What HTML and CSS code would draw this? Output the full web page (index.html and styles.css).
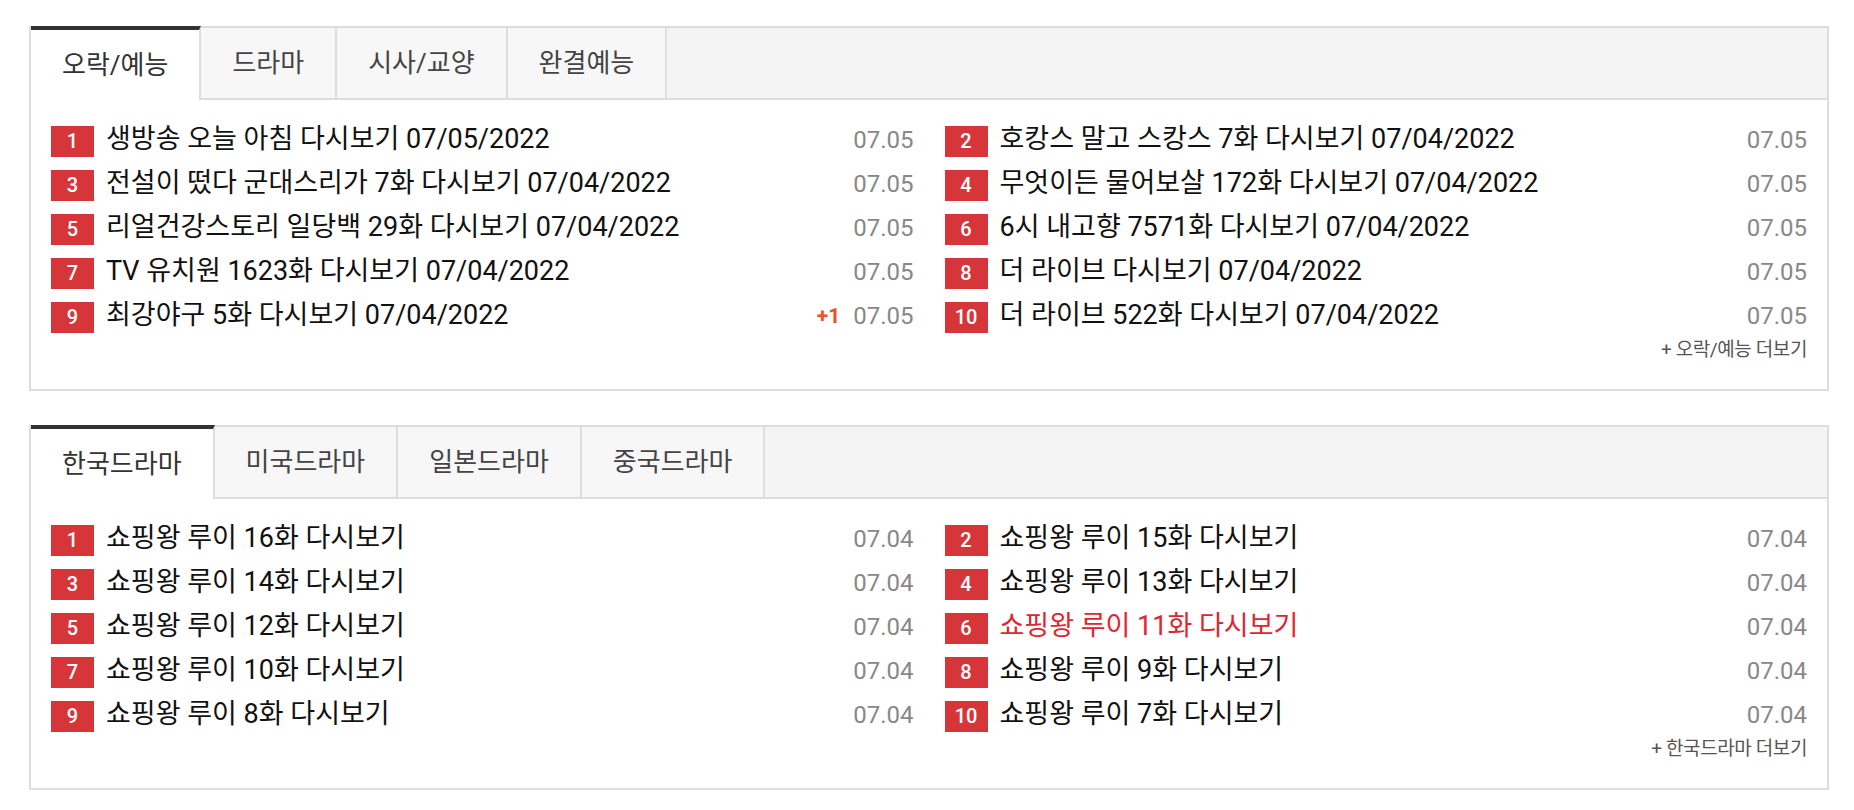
FILE: index.html
```html
<!DOCTYPE html>
<html lang="ko">
<head>
<meta charset="utf-8">
<title>다시보기</title>
<link rel="stylesheet" href="styles.css">
</head>
<body>
<div class="page">
  <section class="board">
    <nav class="tabs">
      <a class="tab active">오락/예능</a>
      <a class="tab">드라마</a>
      <a class="tab">시사/교양</a>
      <a class="tab">완결예능</a>
    </nav>
    <div class="panel">
      <ul class="grid">
        <li class="item"><span class="rank">1</span><a class="title">생방송 오늘 아침 다시보기 07/05/2022</a><span class="date">07.05</span></li>
        <li class="item"><span class="rank">2</span><a class="title">호캉스 말고 스캉스 7화 다시보기 07/04/2022</a><span class="date">07.05</span></li>
        <li class="item"><span class="rank">3</span><a class="title">전설이 떴다 군대스리가 7화 다시보기 07/04/2022</a><span class="date">07.05</span></li>
        <li class="item"><span class="rank">4</span><a class="title">무엇이든 물어보살 172화 다시보기 07/04/2022</a><span class="date">07.05</span></li>
        <li class="item"><span class="rank">5</span><a class="title">리얼건강스토리 일당백 29화 다시보기 07/04/2022</a><span class="date">07.05</span></li>
        <li class="item"><span class="rank">6</span><a class="title">6시 내고향 7571화 다시보기 07/04/2022</a><span class="date">07.05</span></li>
        <li class="item"><span class="rank">7</span><a class="title">TV 유치원 1623화 다시보기 07/04/2022</a><span class="date">07.05</span></li>
        <li class="item"><span class="rank">8</span><a class="title">더 라이브 다시보기 07/04/2022</a><span class="date">07.05</span></li>
        <li class="item"><span class="rank">9</span><a class="title">최강야구 5화 다시보기 07/04/2022</a><span class="hot">+1</span><span class="date">07.05</span></li>
        <li class="item"><span class="rank">10</span><a class="title">더 라이브 522화 다시보기 07/04/2022</a><span class="date">07.05</span></li>
      </ul>
      <div class="more"><a>+ 오락/예능 더보기</a></div>
    </div>
  </section>

  <section class="board">
    <nav class="tabs">
      <a class="tab active">한국드라마</a>
      <a class="tab">미국드라마</a>
      <a class="tab">일본드라마</a>
      <a class="tab">중국드라마</a>
    </nav>
    <div class="panel">
      <ul class="grid">
        <li class="item"><span class="rank">1</span><a class="title">쇼핑왕 루이 16화 다시보기</a><span class="date">07.04</span></li>
        <li class="item"><span class="rank">2</span><a class="title">쇼핑왕 루이 15화 다시보기</a><span class="date">07.04</span></li>
        <li class="item"><span class="rank">3</span><a class="title">쇼핑왕 루이 14화 다시보기</a><span class="date">07.04</span></li>
        <li class="item"><span class="rank">4</span><a class="title">쇼핑왕 루이 13화 다시보기</a><span class="date">07.04</span></li>
        <li class="item"><span class="rank">5</span><a class="title">쇼핑왕 루이 12화 다시보기</a><span class="date">07.04</span></li>
        <li class="item"><span class="rank">6</span><a class="title visited">쇼핑왕 루이 11화 다시보기</a><span class="date">07.04</span></li>
        <li class="item"><span class="rank">7</span><a class="title">쇼핑왕 루이 10화 다시보기</a><span class="date">07.04</span></li>
        <li class="item"><span class="rank">8</span><a class="title">쇼핑왕 루이 9화 다시보기</a><span class="date">07.04</span></li>
        <li class="item"><span class="rank">9</span><a class="title">쇼핑왕 루이 8화 다시보기</a><span class="date">07.04</span></li>
        <li class="item"><span class="rank">10</span><a class="title">쇼핑왕 루이 7화 다시보기</a><span class="date">07.04</span></li>
      </ul>
      <div class="more"><a>+ 한국드라마 더보기</a></div>
    </div>
  </section>
</div>
</body>
</html>
```

FILE: styles.css
```css
* {
  box-sizing: border-box;
}

html, body {
  margin: 0;
  padding: 0;
  background: #ffffff;
}

body {
  font-family: Roboto, "Noto Sans CJK KR", sans-serif;
  color: #111111;
}

.page {
  display: flex;
  flex-direction: column;
  gap: 34px;
  padding: 26px 0 0 29px;
  width: 1829px;
}

.board {
  border: 2px solid #dddddd;
  background: #ffffff;
}

.tabs {
  display: flex;
  height: 72px;
  background: #f4f4f4;
  border-bottom: 2px solid #dddddd;
}

.tab {
  display: block;
  padding: 0 31px;
  background: #f7f7f7;
  border-right: 2px solid #dddddd;
  font-size: 26px;
  line-height: 70px;
  color: #444444;
  white-space: nowrap;
}

.tab.active {
  background: #ffffff;
  margin: -2px 0 -2px 0;
  border-top: 4px solid #333333;
  color: #333333;
}

.panel {
  padding: 16px 20px 27px 20px;
}

.grid {
  list-style: none;
  margin: 0;
  padding: 0;
  display: grid;
  grid-template-columns: 1fr 1fr;
  column-gap: 31px;
}

.item {
  display: flex;
  align-items: flex-start;
  height: 44px;
  padding-top: 10px;
}

.rank {
  flex: 0 0 43px;
  height: 31px;
  margin-right: 12px;
  background: #d6363a;
  color: #ffffff;
  font-size: 20px;
  font-weight: 500;
  line-height: 31px;
  text-align: center;
}

.title {
  flex: 1 1 auto;
  min-width: 0;
  font-size: 27px;
  line-height: 26px;
  color: #111111;
  white-space: nowrap;
}

.title.visited {
  color: #df2630;
}

.hot {
  margin-right: 13px;
  color: #e8542a;
  font-size: 21px;
  font-weight: 700;
  line-height: 28px;
}

.date {
  font-size: 24px;
  line-height: 28px;
  color: #888888;
}

.more {
  margin-top: 2px;
  text-align: right;
  font-size: 19px;
  line-height: 24px;
  letter-spacing: -0.4px;
  color: #555555;
}
```
